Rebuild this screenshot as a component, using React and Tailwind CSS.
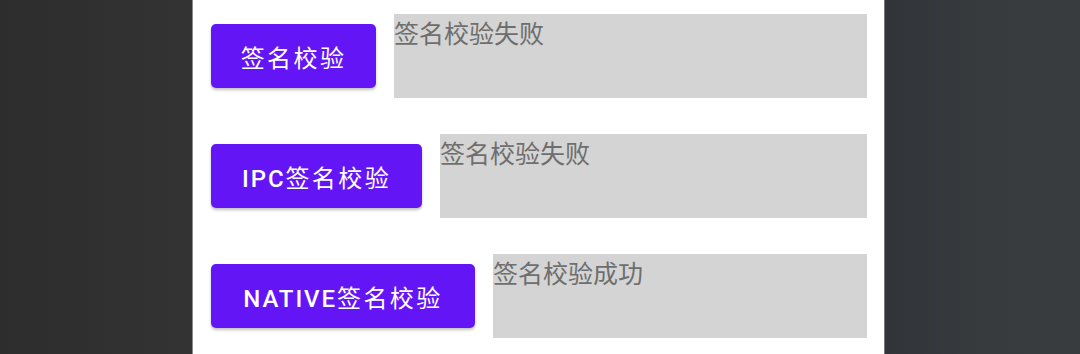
export default function App() {
  const rows = [
    { latin: "", label: "签名校验", w: "w-[165px]", result: "签名校验失败" },
    { latin: "IPC", label: "签名校验", w: "w-[211px]", result: "签名校验失败" },
    { latin: "NATIVE", label: "签名校验", w: "w-[264px]", result: "签名校验成功" },
  ];
  return (
    <div className="flex h-[354px] w-[1080px] overflow-hidden">
      <div className="w-[192px] bg-gradient-to-r from-[#2d2d2d] to-[#333333]" />
      <div className="w-px bg-[#8a8a8a]" />
      <div className="flex w-[691px] flex-col gap-[36px] bg-white pl-[18px] pr-[17px] pt-[14px]">
        {rows.map((r, i) => (
          <div key={i} className="flex h-[84px] items-center gap-[18px]">
            <button
              className={`${r.w} flex h-[64px] shrink-0 items-center justify-center rounded-[5px] bg-[#6415f6] pt-[5px] text-[24px] font-normal tracking-[0.1em] text-white shadow-[0_2px_3px_rgba(0,0,0,0.25)]`}
              style={{ fontFamily: '"Roboto", "Noto Sans CJK SC", sans-serif' }}
            >
              {r.latin && <span className="font-medium tracking-[0.08em]">{r.latin}</span>}
              {r.label}
            </button>
            <div
              className="h-[84px] flex-1 self-start bg-[#d4d4d4] text-[25px] text-[#6e6e6e]"
              style={{ fontFamily: '"Noto Sans CJK SC", sans-serif', lineHeight: "normal" }}
            >
              {r.result}
            </div>
          </div>
        ))}
      </div>
      <div className="w-px bg-[#7a7a7a]" />
      <div className="flex-1 bg-gradient-to-r from-[#313438] via-[#373b3e] to-[#383c3f]" />
    </div>
  );
}
